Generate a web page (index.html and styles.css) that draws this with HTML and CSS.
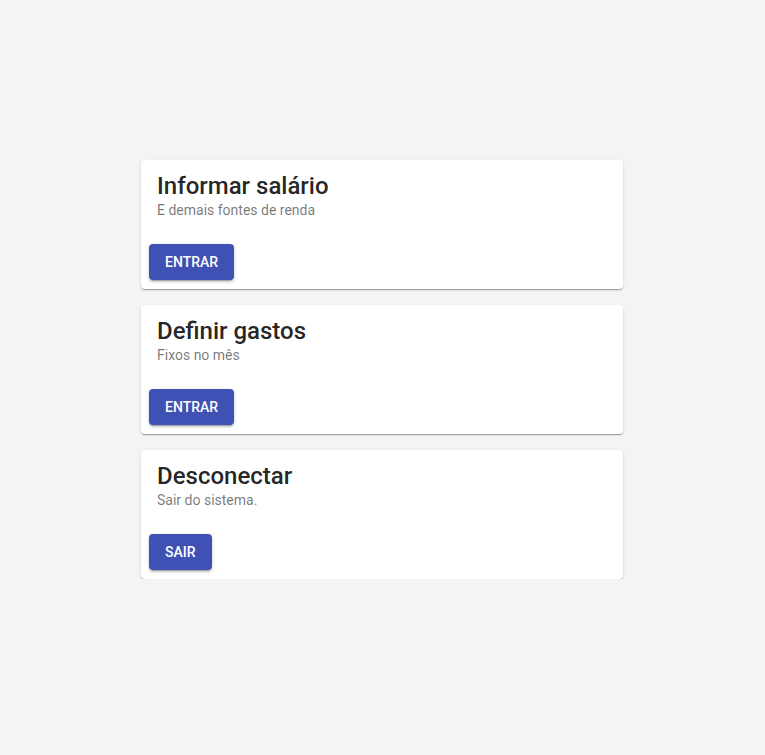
FILE: index.html
```html
<!DOCTYPE html>
<html>
<head>
<meta charset="utf-8">
<link rel="stylesheet" href="styles.css">
</head>
<body>
<main class="list">
  <section class="card">
    <div class="card-head">
      <h2 class="card-title">Informar salário</h2>
      <p class="card-sub">E demais fontes de renda</p>
    </div>
    <div class="card-actions"><button class="btn">Entrar</button></div>
  </section>
  <section class="card">
    <div class="card-head">
      <h2 class="card-title">Definir gastos</h2>
      <p class="card-sub">Fixos no mês</p>
    </div>
    <div class="card-actions"><button class="btn">Entrar</button></div>
  </section>
  <section class="card">
    <div class="card-head">
      <h2 class="card-title">Desconectar</h2>
      <p class="card-sub">Sair do sistema.</p>
    </div>
    <div class="card-actions"><button class="btn">Sair</button></div>
  </section>
</main>
</body>
</html>
```
FILE: styles.css
```css
html, body {
  margin: 0;
  padding: 0;
  background: #f4f4f4;
  font-family: Roboto, "Noto Sans", sans-serif;
}
.list {
  width: 482px;
  margin: 0 0 0 141px;
  padding-top: 160px;
  display: flex;
  flex-direction: column;
  gap: 16px;
}
.card {
  background: #fff;
  border-radius: 4px;
  box-shadow: 0 2px 1px -1px rgba(0,0,0,0.2), 0 1px 1px 0 rgba(0,0,0,0.14), 0 1px 3px 0 rgba(0,0,0,0.12);
  display: flex;
  flex-direction: column;
}
.card-head {
  padding: 10px 16px 0;
}
.card-title {
  margin: 0;
  font-size: 24px;
  font-weight: 500;
  line-height: 32px;
  color: rgba(0,0,0,0.87);
}
.card-sub {
  margin: -2px 0 0;
  font-size: 14px;
  line-height: 20px;
  color: rgba(0,0,0,0.54);
}
.card-actions {
  padding: 24px 8px 9px;
}
.btn {
  height: 36px;
  padding: 0 16px;
  border: none;
  border-radius: 4px;
  background: #3f51b5;
  color: #fff;
  font-family: Roboto, "Noto Sans", sans-serif;
  font-size: 14px;
  font-weight: 500;
  text-transform: uppercase;
  box-shadow: 0 3px 1px -2px rgba(0,0,0,0.2), 0 2px 2px 0 rgba(0,0,0,0.14), 0 1px 5px 0 rgba(0,0,0,0.12);
}
```
